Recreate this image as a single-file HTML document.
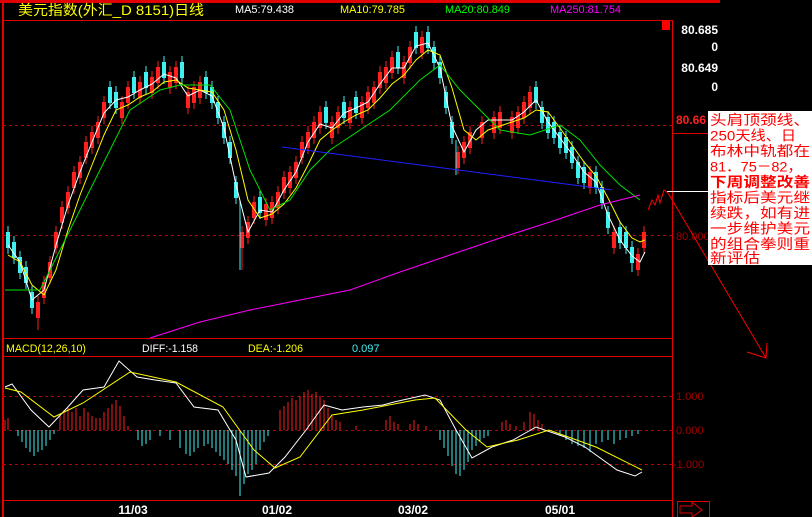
<!DOCTYPE html>
<html><head><meta charset="utf-8"><style>
html,body{margin:0;padding:0;background:#000;width:812px;height:517px;overflow:hidden}
svg{display:block}
text{font-family:"Liberation Sans","Noto Sans CJK SC",sans-serif}
.cn{font-family:"Liberation Sans","Noto Sans CJK SC",sans-serif}
</style></head><body>
<svg width="812" height="517" viewBox="0 0 812 517" xmlns="http://www.w3.org/2000/svg">
<rect width="812" height="517" fill="#000"/>
<g stroke="#e00000" stroke-width="1" fill="none">
<line x1="0" y1="1.5" x2="720" y2="1.5" stroke-width="3"/>
<line x1="3" y1="0" x2="3" y2="517" stroke-width="2"/>
<line x1="3" y1="20.5" x2="672" y2="20.5"/>
<line x1="672.5" y1="20" x2="672.5" y2="517"/>
<line x1="3" y1="338.5" x2="672" y2="338.5"/>
<line x1="3" y1="356.5" x2="672" y2="356.5"/>
<line x1="3" y1="500.5" x2="672" y2="500.5"/>
<line x1="672" y1="133.5" x2="720" y2="133.5"/>
</g>
<rect x="662" y="20" width="8" height="10" fill="#ff0000"/>
<g stroke="#c00000" stroke-dasharray="3,3" stroke-width="1">
<line x1="3" y1="125.5" x2="672" y2="125.5"/>
<line x1="3" y1="235.5" x2="672" y2="235.5"/>
<line x1="3" y1="396.5" x2="672" y2="396.5"/>
<line x1="3" y1="430.5" x2="672" y2="430.5"/>
<line x1="3" y1="464.5" x2="672" y2="464.5"/>
</g>
<text x="18" y="15" fill="#ffff00" font-size="14" class="cn" textLength="186" lengthAdjust="spacingAndGlyphs">美元指数(外汇_D 8151)日线</text>
<text x="235" y="13" fill="#ffffff" font-size="11" textLength="59" lengthAdjust="spacingAndGlyphs">MA5:79.438</text>
<text x="340" y="13" fill="#ffff00" font-size="11" textLength="65" lengthAdjust="spacingAndGlyphs">MA10:79.785</text>
<text x="445" y="13" fill="#00ff00" font-size="11" textLength="65" lengthAdjust="spacingAndGlyphs">MA20:80.849</text>
<text x="550" y="13" fill="#ff00ff" font-size="11" textLength="71" lengthAdjust="spacingAndGlyphs">MA250:81.754</text>
<g font-size="12" font-weight="bold" fill="#ffffff" text-anchor="end">
<text x="718" y="34">80.685</text><text x="718" y="51">0</text>
<text x="718" y="72">80.649</text><text x="718" y="91">0</text>
</g>
<text x="676" y="124" fill="#ff2020" font-size="12" font-weight="bold">80.66</text>
<text x="676" y="240" fill="#a00000" font-size="11">80.000</text>
<g font-size="11" fill="#a00000">
<text x="676" y="400">1.000</text><text x="676" y="434">0.000</text><text x="673" y="468">-1.000</text>
</g>
<path fill="none" stroke="#ff2020" stroke-width="1" d="M38 296V330M44 276V304M50 256V284M56 226V254M62 201V229M68 186V214M74 166V194M80 156V184M86 136V164M92 126V154M98 116V144M104 96V124M122 96V124M128 81V109M140 76V104M152 71V99M158 61V89M170 66V94M176 61V89M188 86V114M194 81V109M200 76V104M242 226V270M248 216V244M254 196V224M266 198V226M272 196V224M278 186V214M284 171V199M290 166V194M296 156V184M302 136V164M308 126V154M314 116V144M320 106V134M332 116V144M338 106V134M350 101V129M362 96V124M368 86V114M374 81V109M380 66V94M386 61V89M392 51V79M404 56V84M410 41V69M422 31V59M458 146V174M464 136V164M470 126V154M482 116V144M494 111V139M500 106V134M512 111V139M518 106V134M524 96V124M530 86V114M590 166V194M614 226V254M638 248V276M644 226V254"/>
<path fill="none" stroke="#ff2020" stroke-width="4" d="M38 302V318M44 282V298M50 262V278M56 232V248M62 207V223M68 192V208M74 172V188M80 162V178M86 142V158M92 132V148M98 122V138M104 102V118M122 102V118M128 87V103M140 82V98M152 77V93M158 67V83M170 72V88M176 67V83M188 92V108M194 87V103M200 82V98M242 232V248M248 222V238M254 202V218M266 204V220M272 202V218M278 192V208M284 177V193M290 172V188M296 162V178M302 142V158M308 132V148M314 122V138M320 112V128M332 122V138M338 112V128M350 107V123M362 102V118M368 92V108M374 87V103M380 72V88M386 67V83M392 57V73M404 62V78M410 47V63M422 37V53M458 152V168M464 142V158M470 132V148M482 122V138M494 117V133M500 112V128M512 117V133M518 112V128M524 102V118M530 92V108M590 172V188M614 232V248M638 254V270M644 232V248"/>
<path fill="none" stroke="#40f0f0" stroke-width="1" d="M8 226V254M14 236V264M20 251V279M26 261V289M32 286V314M110 81V109M116 86V114M134 71V99M146 66V94M164 56V84M182 56V84M206 71V99M212 81V109M218 96V124M224 116V144M230 136V164M236 176V204M240 200V270M260 191V219M326 101V129M344 96V124M356 91V119M398 46V74M416 26V54M428 26V54M434 41V69M440 56V84M446 86V114M452 116V144M456 140V175M536 81V109M542 101V129M548 111V139M554 116V144M560 126V154M566 131V159M572 141V169M578 156V184M584 161V189M596 166V194M602 181V209M608 206V234M620 221V249M626 226V254M632 241V272"/>
<path fill="none" stroke="#40f0f0" stroke-width="4" d="M8 232V248M14 242V258M20 257V273M26 267V283M32 292V308M110 87V103M116 92V108M134 77V93M146 72V88M164 62V78M182 62V78M206 77V93M212 87V103M218 102V118M224 122V138M230 142V158M236 182V198M260 197V213M326 107V123M344 102V118M356 97V113M398 52V68M416 32V48M428 32V48M434 47V63M440 62V78M446 92V108M452 122V138M536 87V103M542 107V123M548 117V133M554 122V138M560 132V148M566 137V153M572 147V163M578 162V178M584 167V183M596 172V188M602 187V203M608 212V228M620 227V243M626 232V248M632 247V263"/>
<polyline fill="none" stroke="#ffffff" stroke-width="1" points="8,245 20,262 32,300 44,290 56,245 68,205 80,172 92,142 104,113 116,100 128,97 140,90 152,84 164,74 176,78 188,96 200,90 212,96 224,128 236,185 248,232 260,210 272,212 284,190 296,172 308,142 320,124 332,128 344,113 356,108 368,102 380,84 392,68 404,68 416,46 428,43 440,68 452,126 464,152 476,130 488,120 500,120 512,120 524,112 536,100 548,122 560,138 572,154 584,172 596,182 608,215 620,240 632,256 640,262 645,252"/>
<polyline fill="none" stroke="#ffff00" stroke-width="1" points="8,255 20,262 32,285 44,295 56,270 68,230 80,195 92,165 104,135 116,110 128,105 140,97 152,92 164,82 176,80 188,88 200,90 212,92 224,110 236,150 248,200 260,218 272,214 284,204 296,188 308,165 320,140 332,130 344,122 356,115 368,110 380,98 392,84 404,75 416,60 428,50 440,55 452,88 464,130 476,140 488,130 500,126 512,122 524,118 536,110 548,112 560,128 572,145 584,162 596,176 608,198 620,222 632,238 640,242 645,240"/>
<polyline fill="none" stroke="#00e000" stroke-width="1" points="5,290 40,290 70,230 100,170 130,110 160,90 180,85 210,85 230,110 250,170 270,210 290,200 310,170 330,150 360,130 390,110 420,80 440,65 460,90 480,110 500,130 530,135 560,125 580,140 600,165 620,185 640,200"/>
<polyline fill="none" stroke="#ff00ff" stroke-width="1" points="150,338 200,322 250,310 300,300 350,290 400,272 450,255 500,238 550,222 600,205 640,195"/>
<line x1="282" y1="147" x2="612" y2="190" stroke="#2020ff" stroke-width="1"/>
<line x1="667" y1="191.5" x2="708" y2="191.5" stroke="#ffffff"/>
<polyline fill="none" stroke="#ff0000" points="648,210 652,200 655,205 658,195 660,203 664,190 668,193 766,358"/>
<polyline fill="none" stroke="#ff0000" points="747,352 766,358 767,343"/>
<rect x="708" y="111" width="104" height="154" fill="#ffffff"/>
<g fill="#ff0000" font-size="14" class="cn" lengthAdjust="spacingAndGlyphs">
<text x="710" y="125" textLength="100" lengthAdjust="spacingAndGlyphs">头肩顶颈线、</text>
<text x="710" y="140.5" textLength="86" lengthAdjust="spacingAndGlyphs">250天线、日</text>
<text x="710" y="156" textLength="100" lengthAdjust="spacingAndGlyphs">布林中轨都在</text>
<text x="710" y="171.5" textLength="92" lengthAdjust="spacingAndGlyphs">81．75－82，</text>
<text x="710" y="187" textLength="100" lengthAdjust="spacingAndGlyphs" font-weight="bold">下周调整改善</text>
<text x="710" y="202.5" textLength="100" lengthAdjust="spacingAndGlyphs">指标后美元继</text>
<text x="710" y="218" textLength="100" lengthAdjust="spacingAndGlyphs">续跌，如有进</text>
<text x="710" y="233.5" textLength="100" lengthAdjust="spacingAndGlyphs">一步维护美元</text>
<text x="710" y="249" textLength="100" lengthAdjust="spacingAndGlyphs">的组合拳则重</text>
<text x="710" y="263" textLength="50" lengthAdjust="spacingAndGlyphs">新评估</text>
</g>
<text x="6" y="352" fill="#ffff00" font-size="11" textLength="80" lengthAdjust="spacingAndGlyphs">MACD(12,26,10)</text>
<text x="142" y="352" fill="#ffffff" font-size="11" textLength="56" lengthAdjust="spacingAndGlyphs">DIFF:-1.158</text>
<text x="248" y="352" fill="#ffff00" font-size="11" textLength="55" lengthAdjust="spacingAndGlyphs">DEA:-1.206</text>
<text x="352" y="352" fill="#40f0f0" font-size="11">0.097</text>
<path fill="none" stroke="#ff2020" stroke-width="1" d="M5 430V420M8 430V418M60 430V416M64 430V410M68 430V408M72 430V412M76 430V408M80 430V416M84 430V408M88 430V412M92 430V416M96 430V418M100 430V418M104 430V412M108 430V408M112 430V404M116 430V400M120 430V406M124 430V416M128 430V426M280 430V410M284 430V406M288 430V402M292 430V398M296 430V400M300 430V396M304 430V392M308 430V390M312 430V394M316 430V392M320 430V396M324 430V400M328 430V408M332 430V416M336 430V420M340 430V422M356 430V426M386 430V420M390 430V416M394 430V422M398 430V424M410 430V424M414 430V420M418 430V424M426 430V426M502 430V422M506 430V420M510 430V424M516 430V426M524 430V422M530 430V412M534 430V414M538 430V420M542 430V424"/>
<path fill="none" stroke="#40f0f0" stroke-width="1" d="M18 430V436M22 430V442M26 430V448M30 430V452M34 430V456M38 430V452M42 430V450M46 430V446M50 430V440M54 430V434M138 430V440M142 430V446M146 430V444M150 430V440M160 430V436M170 430V440M180 430V448M186 430V454M190 430V456M194 430V452M198 430V448M204 430V446M208 430V444M212 430V448M216 430V452M220 430V456M224 430V460M228 430V464M232 430V470M236 430V476M240 430V496M244 430V484M248 430V474M252 430V470M256 430V464M260 430V450M264 430V442M268 430V436M440 430V440M444 430V448M448 430V456M452 430V466M456 430V474M460 430V476M464 430V470M468 430V462M472 430V450M476 430V446M480 430V442M484 430V438M488 430V436M560 430V436M566 430V440M572 430V444M578 430V446M584 430V448M590 430V452M596 430V444M602 430V442M608 430V440M614 430V444M620 430V440M626 430V438M632 430V436M638 430V434"/>
<polyline fill="none" stroke="#ffffff" stroke-width="1" points="5,387 12,384 31,410 49,427 67,408 83,390 104,387 119,361 137,377 155,380 176,383 194,407 218,410 236,440 246,477 269,473 285,457 306,430 324,405 342,410 363,407 383,405 394,402 425,395 440,400 456,430 472,458 492,447 513,440 536,427 565,437 585,447 617,470 635,476 642,472"/>
<polyline fill="none" stroke="#ffff00" stroke-width="1" points="5,388 21,392 54,417 83,403 130,372 176,382 223,407 254,450 275,468 300,457 332,415 363,410 415,400 435,398 466,430 487,447 518,440 549,430 596,447 642,470"/>
<g fill="#ffffff" font-size="12" font-weight="bold" text-anchor="middle">
<text x="133" y="514">11/03</text><text x="277" y="514">01/02</text>
<text x="413" y="514">03/02</text><text x="560" y="514">05/01</text>
</g>
<rect x="677.5" y="501.5" width="32" height="16" fill="none" stroke="#e00000"/>
<polyline fill="none" stroke="#e00000" points="680,506 692,506 692,502 702,510 692,517 692,513 680,513 680,506"/>
</svg>
</body></html>
